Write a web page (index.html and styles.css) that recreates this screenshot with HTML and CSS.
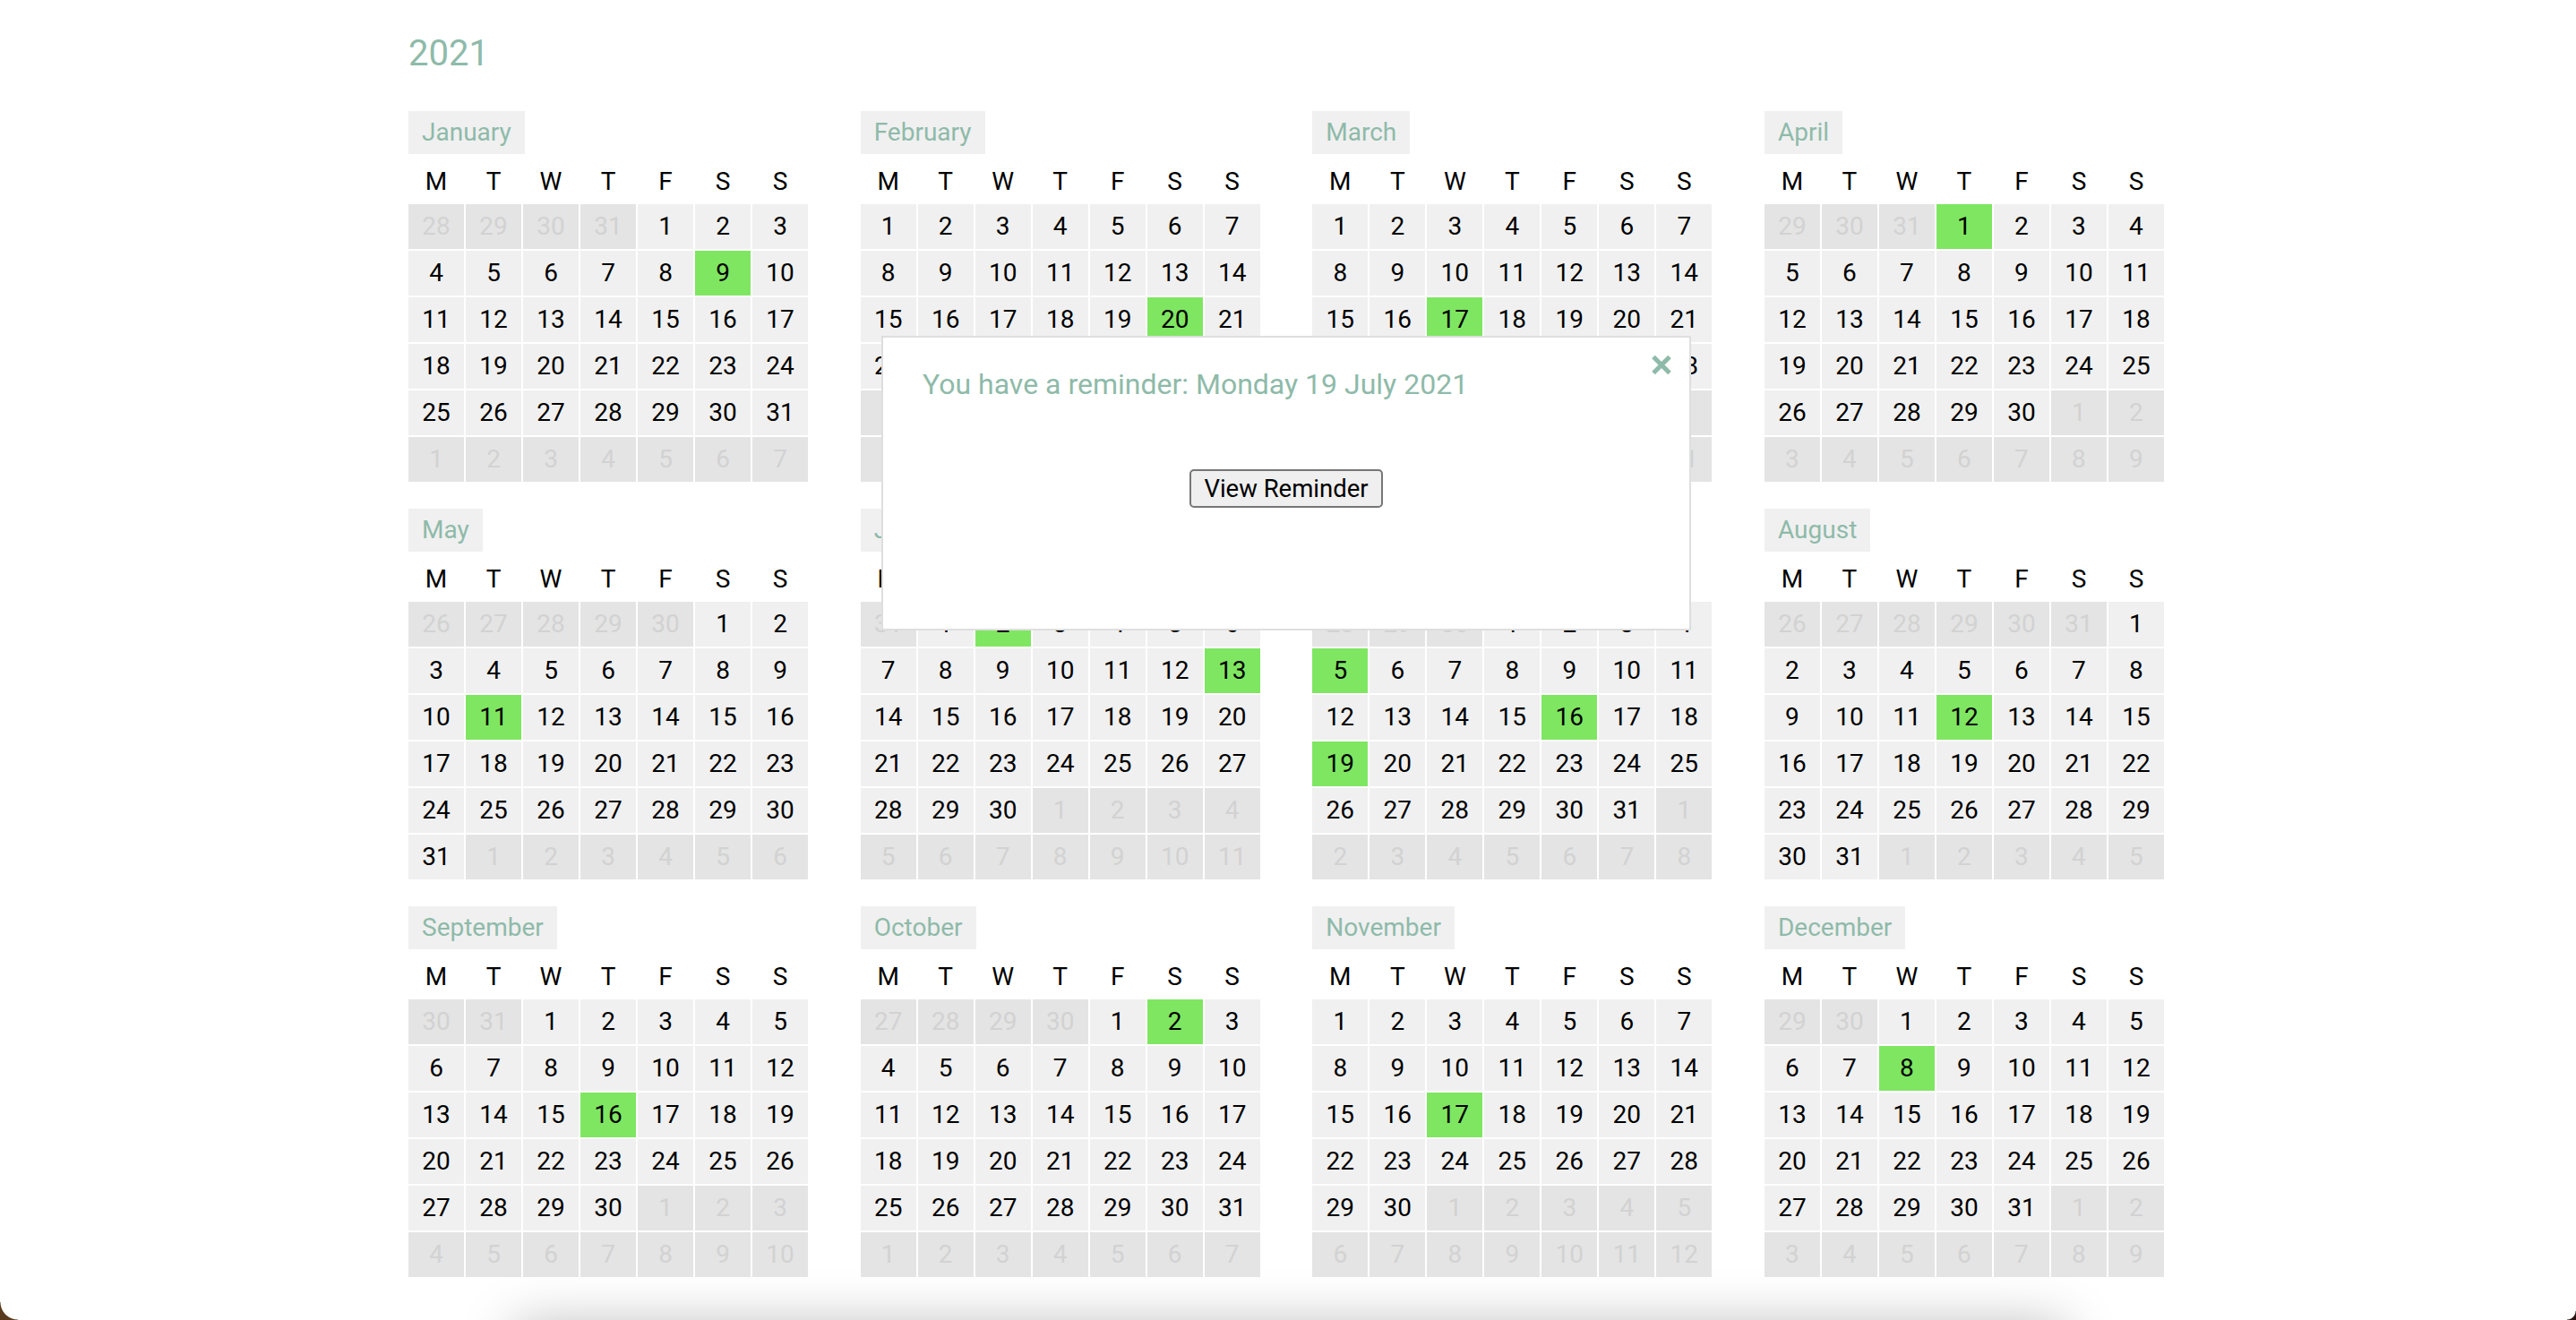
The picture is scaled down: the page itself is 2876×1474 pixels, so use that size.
FILE: index.html
```html
<!DOCTYPE html>
<html lang="en">
<head>
<meta charset="utf-8">
<title>2021 Calendar</title>
<link rel="stylesheet" href="styles.css">
</head>
<body>
<main class="page">
  <h1 class="year">2021</h1>
  <section class="months">

    <div class="month">
      <div class="month-name">January</div>
      <div class="weekdays"><span>M</span><span>T</span><span>W</span><span>T</span><span>F</span><span>S</span><span>S</span></div>
      <div class="days">
        <span class="o">28</span><span class="o">29</span><span class="o">30</span><span class="o">31</span><span>1</span><span>2</span><span>3</span>
        <span>4</span><span>5</span><span>6</span><span>7</span><span>8</span><span class="h">9</span><span>10</span>
        <span>11</span><span>12</span><span>13</span><span>14</span><span>15</span><span>16</span><span>17</span>
        <span>18</span><span>19</span><span>20</span><span>21</span><span>22</span><span>23</span><span>24</span>
        <span>25</span><span>26</span><span>27</span><span>28</span><span>29</span><span>30</span><span>31</span>
        <span class="o">1</span><span class="o">2</span><span class="o">3</span><span class="o">4</span><span class="o">5</span><span class="o">6</span><span class="o">7</span>
      </div>
    </div>

    <div class="month">
      <div class="month-name">February</div>
      <div class="weekdays"><span>M</span><span>T</span><span>W</span><span>T</span><span>F</span><span>S</span><span>S</span></div>
      <div class="days">
        <span>1</span><span>2</span><span>3</span><span>4</span><span>5</span><span>6</span><span>7</span>
        <span>8</span><span>9</span><span>10</span><span>11</span><span>12</span><span>13</span><span>14</span>
        <span>15</span><span>16</span><span>17</span><span>18</span><span>19</span><span class="h">20</span><span>21</span>
        <span>22</span><span>23</span><span>24</span><span>25</span><span>26</span><span>27</span><span>28</span>
        <span class="o">1</span><span class="o">2</span><span class="o">3</span><span class="o">4</span><span class="o">5</span><span class="o">6</span><span class="o">7</span>
        <span class="o">8</span><span class="o">9</span><span class="o">10</span><span class="o">11</span><span class="o">12</span><span class="o">13</span><span class="o">14</span>
      </div>
    </div>

    <div class="month">
      <div class="month-name">March</div>
      <div class="weekdays"><span>M</span><span>T</span><span>W</span><span>T</span><span>F</span><span>S</span><span>S</span></div>
      <div class="days">
        <span>1</span><span>2</span><span>3</span><span>4</span><span>5</span><span>6</span><span>7</span>
        <span>8</span><span>9</span><span>10</span><span>11</span><span>12</span><span>13</span><span>14</span>
        <span>15</span><span>16</span><span class="h">17</span><span>18</span><span>19</span><span>20</span><span>21</span>
        <span>22</span><span>23</span><span>24</span><span>25</span><span>26</span><span>27</span><span>28</span>
        <span>29</span><span>30</span><span>31</span><span class="o">1</span><span class="o">2</span><span class="o">3</span><span class="o">4</span>
        <span class="o">5</span><span class="o">6</span><span class="o">7</span><span class="o">8</span><span class="o">9</span><span class="o">10</span><span class="o">11</span>
      </div>
    </div>

    <div class="month">
      <div class="month-name">April</div>
      <div class="weekdays"><span>M</span><span>T</span><span>W</span><span>T</span><span>F</span><span>S</span><span>S</span></div>
      <div class="days">
        <span class="o">29</span><span class="o">30</span><span class="o">31</span><span class="h">1</span><span>2</span><span>3</span><span>4</span>
        <span>5</span><span>6</span><span>7</span><span>8</span><span>9</span><span>10</span><span>11</span>
        <span>12</span><span>13</span><span>14</span><span>15</span><span>16</span><span>17</span><span>18</span>
        <span>19</span><span>20</span><span>21</span><span>22</span><span>23</span><span>24</span><span>25</span>
        <span>26</span><span>27</span><span>28</span><span>29</span><span>30</span><span class="o">1</span><span class="o">2</span>
        <span class="o">3</span><span class="o">4</span><span class="o">5</span><span class="o">6</span><span class="o">7</span><span class="o">8</span><span class="o">9</span>
      </div>
    </div>

    <div class="month">
      <div class="month-name">May</div>
      <div class="weekdays"><span>M</span><span>T</span><span>W</span><span>T</span><span>F</span><span>S</span><span>S</span></div>
      <div class="days">
        <span class="o">26</span><span class="o">27</span><span class="o">28</span><span class="o">29</span><span class="o">30</span><span>1</span><span>2</span>
        <span>3</span><span>4</span><span>5</span><span>6</span><span>7</span><span>8</span><span>9</span>
        <span>10</span><span class="h">11</span><span>12</span><span>13</span><span>14</span><span>15</span><span>16</span>
        <span>17</span><span>18</span><span>19</span><span>20</span><span>21</span><span>22</span><span>23</span>
        <span>24</span><span>25</span><span>26</span><span>27</span><span>28</span><span>29</span><span>30</span>
        <span>31</span><span class="o">1</span><span class="o">2</span><span class="o">3</span><span class="o">4</span><span class="o">5</span><span class="o">6</span>
      </div>
    </div>

    <div class="month">
      <div class="month-name">June</div>
      <div class="weekdays"><span>M</span><span>T</span><span>W</span><span>T</span><span>F</span><span>S</span><span>S</span></div>
      <div class="days">
        <span class="o">31</span><span>1</span><span class="h">2</span><span>3</span><span>4</span><span>5</span><span>6</span>
        <span>7</span><span>8</span><span>9</span><span>10</span><span>11</span><span>12</span><span class="h">13</span>
        <span>14</span><span>15</span><span>16</span><span>17</span><span>18</span><span>19</span><span>20</span>
        <span>21</span><span>22</span><span>23</span><span>24</span><span>25</span><span>26</span><span>27</span>
        <span>28</span><span>29</span><span>30</span><span class="o">1</span><span class="o">2</span><span class="o">3</span><span class="o">4</span>
        <span class="o">5</span><span class="o">6</span><span class="o">7</span><span class="o">8</span><span class="o">9</span><span class="o">10</span><span class="o">11</span>
      </div>
    </div>

    <div class="month">
      <div class="month-name">July</div>
      <div class="weekdays"><span>M</span><span>T</span><span>W</span><span>T</span><span>F</span><span>S</span><span>S</span></div>
      <div class="days">
        <span class="o">28</span><span class="o">29</span><span class="o">30</span><span>1</span><span>2</span><span>3</span><span>4</span>
        <span class="h">5</span><span>6</span><span>7</span><span>8</span><span>9</span><span>10</span><span>11</span>
        <span>12</span><span>13</span><span>14</span><span>15</span><span class="h">16</span><span>17</span><span>18</span>
        <span class="h">19</span><span>20</span><span>21</span><span>22</span><span>23</span><span>24</span><span>25</span>
        <span>26</span><span>27</span><span>28</span><span>29</span><span>30</span><span>31</span><span class="o">1</span>
        <span class="o">2</span><span class="o">3</span><span class="o">4</span><span class="o">5</span><span class="o">6</span><span class="o">7</span><span class="o">8</span>
      </div>
    </div>

    <div class="month">
      <div class="month-name">August</div>
      <div class="weekdays"><span>M</span><span>T</span><span>W</span><span>T</span><span>F</span><span>S</span><span>S</span></div>
      <div class="days">
        <span class="o">26</span><span class="o">27</span><span class="o">28</span><span class="o">29</span><span class="o">30</span><span class="o">31</span><span>1</span>
        <span>2</span><span>3</span><span>4</span><span>5</span><span>6</span><span>7</span><span>8</span>
        <span>9</span><span>10</span><span>11</span><span class="h">12</span><span>13</span><span>14</span><span>15</span>
        <span>16</span><span>17</span><span>18</span><span>19</span><span>20</span><span>21</span><span>22</span>
        <span>23</span><span>24</span><span>25</span><span>26</span><span>27</span><span>28</span><span>29</span>
        <span>30</span><span>31</span><span class="o">1</span><span class="o">2</span><span class="o">3</span><span class="o">4</span><span class="o">5</span>
      </div>
    </div>

    <div class="month">
      <div class="month-name">September</div>
      <div class="weekdays"><span>M</span><span>T</span><span>W</span><span>T</span><span>F</span><span>S</span><span>S</span></div>
      <div class="days">
        <span class="o">30</span><span class="o">31</span><span>1</span><span>2</span><span>3</span><span>4</span><span>5</span>
        <span>6</span><span>7</span><span>8</span><span>9</span><span>10</span><span>11</span><span>12</span>
        <span>13</span><span>14</span><span>15</span><span class="h">16</span><span>17</span><span>18</span><span>19</span>
        <span>20</span><span>21</span><span>22</span><span>23</span><span>24</span><span>25</span><span>26</span>
        <span>27</span><span>28</span><span>29</span><span>30</span><span class="o">1</span><span class="o">2</span><span class="o">3</span>
        <span class="o">4</span><span class="o">5</span><span class="o">6</span><span class="o">7</span><span class="o">8</span><span class="o">9</span><span class="o">10</span>
      </div>
    </div>

    <div class="month">
      <div class="month-name">October</div>
      <div class="weekdays"><span>M</span><span>T</span><span>W</span><span>T</span><span>F</span><span>S</span><span>S</span></div>
      <div class="days">
        <span class="o">27</span><span class="o">28</span><span class="o">29</span><span class="o">30</span><span>1</span><span class="h">2</span><span>3</span>
        <span>4</span><span>5</span><span>6</span><span>7</span><span>8</span><span>9</span><span>10</span>
        <span>11</span><span>12</span><span>13</span><span>14</span><span>15</span><span>16</span><span>17</span>
        <span>18</span><span>19</span><span>20</span><span>21</span><span>22</span><span>23</span><span>24</span>
        <span>25</span><span>26</span><span>27</span><span>28</span><span>29</span><span>30</span><span>31</span>
        <span class="o">1</span><span class="o">2</span><span class="o">3</span><span class="o">4</span><span class="o">5</span><span class="o">6</span><span class="o">7</span>
      </div>
    </div>

    <div class="month">
      <div class="month-name">November</div>
      <div class="weekdays"><span>M</span><span>T</span><span>W</span><span>T</span><span>F</span><span>S</span><span>S</span></div>
      <div class="days">
        <span>1</span><span>2</span><span>3</span><span>4</span><span>5</span><span>6</span><span>7</span>
        <span>8</span><span>9</span><span>10</span><span>11</span><span>12</span><span>13</span><span>14</span>
        <span>15</span><span>16</span><span class="h">17</span><span>18</span><span>19</span><span>20</span><span>21</span>
        <span>22</span><span>23</span><span>24</span><span>25</span><span>26</span><span>27</span><span>28</span>
        <span>29</span><span>30</span><span class="o">1</span><span class="o">2</span><span class="o">3</span><span class="o">4</span><span class="o">5</span>
        <span class="o">6</span><span class="o">7</span><span class="o">8</span><span class="o">9</span><span class="o">10</span><span class="o">11</span><span class="o">12</span>
      </div>
    </div>

    <div class="month">
      <div class="month-name">December</div>
      <div class="weekdays"><span>M</span><span>T</span><span>W</span><span>T</span><span>F</span><span>S</span><span>S</span></div>
      <div class="days">
        <span class="o">29</span><span class="o">30</span><span>1</span><span>2</span><span>3</span><span>4</span><span>5</span>
        <span>6</span><span>7</span><span class="h">8</span><span>9</span><span>10</span><span>11</span><span>12</span>
        <span>13</span><span>14</span><span>15</span><span>16</span><span>17</span><span>18</span><span>19</span>
        <span>20</span><span>21</span><span>22</span><span>23</span><span>24</span><span>25</span><span>26</span>
        <span>27</span><span>28</span><span>29</span><span>30</span><span>31</span><span class="o">1</span><span class="o">2</span>
        <span class="o">3</span><span class="o">4</span><span class="o">5</span><span class="o">6</span><span class="o">7</span><span class="o">8</span><span class="o">9</span>
      </div>
    </div>

  </section>
  <footer class="shelf"></footer>
</main>

<div class="reminder" role="dialog">
  <button class="close" type="button" aria-label="Close">
    <svg viewBox="0 0 24 23" width="24" height="23"><path d="M3 2.5 L21 20.5 M21 2.5 L3 20.5" stroke="#8ebaa9" stroke-width="5" fill="none"/></svg>
  </button>
  <p class="reminder-text">You have a reminder: Monday 19 July 2021</p>
  <div class="reminder-actions"><button class="view-btn" type="button">View Reminder</button></div>
</div>

<div class="corner corner-left"></div>
<div class="corner corner-right"></div>
</body>
</html>
```

FILE: styles.css
```css
html, body {
  margin: 0;
  padding: 0;
  background: #ffffff;
}

body {
  font-family: Roboto, "Liberation Sans", Arial, sans-serif;
  color: #000;
}

.page {
  margin-left: 456px;
  width: 1968px;
}

.year {
  margin: 0;
  padding-top: 36px;
  font-size: 40px;
  line-height: 48px;
  font-weight: 400;
  color: #8ebaa9;
}

.months {
  margin-top: 40px;
  display: grid;
  grid-template-columns: repeat(4, 454px);
  column-gap: 50.67px;
  row-gap: 30px;
}

.month {
  display: flex;
  flex-direction: column;
  align-items: flex-start;
}

.month-name {
  background: #f0f0f0;
  color: #8ebaa9;
  font-size: 28px;
  line-height: 48px;
  padding: 0 15px;
}

.weekdays {
  margin-top: 6px;
  display: grid;
  grid-template-columns: repeat(7, 62px);
  column-gap: 2px;
  font-size: 28px;
  line-height: 50px;
  text-align: center;
}

.days {
  display: grid;
  grid-template-columns: repeat(7, 62px);
  grid-auto-rows: 50px;
  gap: 2px;
  font-size: 28px;
  line-height: 50px;
  text-align: center;
}

.days span {
  background: #f0f0f0;
  color: #000;
}

.days span.o {
  background: #e4e4e4;
  color: #d2d2d2;
}

.days span.h {
  background: #7fe662;
}

.shelf {
  margin: 54px auto 0;
  width: 1730px;
  height: 120px;
  background: #fff;
  box-shadow: 0 0 60px rgba(0, 0, 0, 0.28);
}

.reminder {
  position: absolute;
  left: 984px;
  top: 375px;
  width: 904px;
  height: 329px;
  box-sizing: border-box;
  background: #fff;
  border: 2px solid #dedede;
  padding: 32px 44px 0;
}

.reminder-text {
  margin: 0;
  font-size: 32px;
  line-height: 40px;
  color: #8ebaa9;
}

.close {
  position: absolute;
  top: 19px;
  right: 19px;
  width: 24px;
  height: 23px;
  padding: 0;
  border: 0;
  background: none;
  display: block;
}

.close svg {
  display: block;
}

.reminder-actions {
  margin-top: 75px;
  display: flex;
  justify-content: center;
}

.view-btn {
  height: 43px;
  width: 216px;
  box-sizing: border-box;
  padding: 0 10px;
  font-family: Roboto, "Liberation Sans", Arial, sans-serif;
  font-size: 27.5px;
  color: #000;
  background: #efefef;
  border: 2px solid #767676;
  border-radius: 5px;
}

.corner {
  position: fixed;
  bottom: 0;
}

.corner-left {
  left: 0;
  width: 20px;
  height: 20px;
  background: radial-gradient(circle at 100% 0, transparent 19px, #5a3a1e 20px);
}

.corner-right {
  right: 0;
  width: 10px;
  height: 10px;
  background: radial-gradient(circle at 0 0, transparent 9px, #2a1412 10px);
}
```
